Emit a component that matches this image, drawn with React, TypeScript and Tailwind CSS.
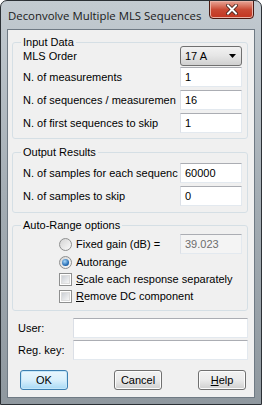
import React from 'react';

function TextBox({ value = '', width = 'w-[62px]', disabled = false }: { value?: string; width?: string; disabled?: boolean }) {
  return (
    <div
      className={`${width} h-[20px] flex items-center px-[4px] border border-t-[#abadb3] border-l-[#dbdfe6] border-r-[#e3e9ef] border-b-[#e3e9ef] ${
        disabled ? 'bg-[#f4f4f4] text-[#6d6d6d] border-[#b5b5b5]' : 'bg-white text-black'
      }`}
    >
      {value}
    </div>
  );
}

function Radio({ checked = false }: { checked?: boolean }) {
  return (
    <div className="w-[13px] h-[13px] rounded-full border border-[#8e8f8f] bg-linear-to-br from-[#d4d4d4] to-[#fbfbfb] flex items-center justify-center shrink-0">
      {checked && (
        <div className="w-[7px] h-[7px] rounded-full bg-[radial-gradient(circle_at_40%_35%,#a8d8fb,#2168b0_65%,#0e3f78)]" />
      )}
    </div>
  );
}

function Check() {
  return (
    <div className="w-[13px] h-[13px] border border-[#8e8f8f] bg-white p-[1px] shrink-0">
      <div className="w-full h-full bg-linear-to-br from-[#cbcfd5] to-[#f7f7f7] border border-[#dcdcdc]" />
    </div>
  );
}

function Button({ children, focused = false, className = '' }: { children: React.ReactNode; focused?: boolean; className?: string }) {
  return (
    <div
      className={`w-[48px] h-[20px] rounded-[3px] border flex items-center justify-center ${
        focused
          ? 'border-[#3c7fb1] bg-linear-to-b from-[#eaf6fd] via-[#d9f0fc] to-[#a7d9f5] shadow-[inset_0_0_0_1px_#c5e7f9]'
          : 'border-[#707070] bg-linear-to-b from-[#f2f2f2] via-[#ebebeb] to-[#cfcfcf] shadow-[inset_0_0_0_1px_#fcfcfc]'
      } ${className}`}
    >
      {children}
    </div>
  );
}

function Row({ label, children }: { label: string; children: React.ReactNode }) {
  return (
    <div className="flex items-center justify-between h-[20px]">
      <span className="whitespace-nowrap">{label}</span>
      {children}
    </div>
  );
}

export default function App() {
  return (
    <div className="w-[262px] h-[405px] rounded-t-[7px] border border-[#2b3035] bg-linear-to-b from-[#c3cbd1] via-[#a3acb3] to-[#8f989f] flex flex-col font-['Liberation_Sans',Arial,sans-serif] text-[11px] text-black overflow-hidden">
      {/* Title bar */}
      <div className="h-[28px] flex items-start shrink-0">
        <span className="pl-[7px] pt-[6px] font-['Open_Sans',sans-serif] text-[11.4px] text-[#1a1a1a] whitespace-nowrap">
          Deconvolve Multiple MLS Sequences
        </span>
        <div className="ml-auto mr-[7px] -mt-[1px] w-[45px] h-[19px] rounded-b-[4px] border border-[#4b1a12] bg-linear-to-b from-[#e8a597] via-[#c94a35] to-[#c2341f] flex items-center justify-center shadow-[inset_0_0_0_1px_#eab2a6]">
          <svg width="12" height="11" viewBox="0 0 12 11">
            <path d="M2 1.5L10 9.5M10 1.5L2 9.5" stroke="#3a1a14" strokeWidth="3.6" strokeLinecap="square" />
            <path d="M2 1.5L10 9.5M10 1.5L2 9.5" stroke="#ffffff" strokeWidth="2" strokeLinecap="square" />
          </svg>
        </div>
      </div>

      {/* Client area */}
      <div className="mx-[6px] h-[369px] border border-[#6f7a84] bg-[#f0f0f0] shrink-0">
        {/* Input Data */}
        <fieldset className="mt-[8px] ml-[4px] mr-[6px] border border-[#d5dfe5] rounded-[3px] pl-[10px] pr-[5px] pb-[5px]">
          <legend className="leading-[8px] px-[2px] -ml-[2px]">Input Data</legend>
          <Row label="MLS Order">
            <div className="w-[62px] h-[20px] rounded-[3px] border border-[#707070] bg-linear-to-b from-[#f2f2f2] via-[#e5e5e5] to-[#d0d0d0] flex items-center pl-[4px] pr-[5px]">
              <span>17 A</span>
              <svg className="ml-auto" width="7" height="4" viewBox="0 0 7 4">
                <path d="M0 0H7L3.5 4Z" fill="#000" />
              </svg>
            </div>
          </Row>
          <div className="mt-[1px] flex flex-col gap-[3px]">
            <Row label="N. of measurements">
              <TextBox value="1" />
            </Row>
            <Row label="N. of sequences / measuremen">
              <TextBox value="16" />
            </Row>
            <Row label="N. of first sequences to skip">
              <TextBox value="1" />
            </Row>
          </div>
        </fieldset>

        {/* Output Results */}
        <fieldset className="mt-[9px] ml-[4px] mr-[6px] border border-[#d5dfe5] rounded-[3px] pl-[10px] pr-[5px] pt-[7px] pb-[6px]">
          <legend className="leading-[8px] px-[2px] -ml-[2px]">Output Results</legend>
          <div className="flex flex-col gap-[3px]">
            <Row label="N. of samples for each sequenc">
              <TextBox value="60000" />
            </Row>
            <Row label="N. of samples to skip">
              <TextBox value="0" />
            </Row>
          </div>
        </fieldset>

        {/* Auto-Range options */}
        <fieldset className="mt-[8px] ml-[4px] mr-[6px] border border-[#d5dfe5] rounded-[3px] pl-[10px] pr-[5px] pt-[5px] pb-[5px]">
          <legend className="leading-[8px] px-[2px] -ml-[2px]">Auto-Range options</legend>
          <div className="flex items-center h-[20px] pl-[36px]">
            <Radio />
            <span className="ml-[4px] whitespace-nowrap">Fixed gain (dB) =</span>
            <div className="ml-auto">
              <TextBox value="39.023" disabled />
            </div>
          </div>
          <div className="flex items-center h-[17px] pl-[36px]">
            <Radio checked />
            <span className="ml-[4px]">Autorange</span>
          </div>
          <div className="flex items-center h-[17px] pl-[36px]">
            <Check />
            <span className="ml-[4px] whitespace-nowrap">
              <u>S</u>cale each response separately
            </span>
          </div>
          <div className="flex items-center h-[17px] pl-[36px]">
            <Check />
            <span className="ml-[4px] whitespace-nowrap">
              <u>R</u>emove DC component
            </span>
          </div>
        </fieldset>

        {/* User / key */}
        <div className="mt-[7px] flex flex-col gap-[2px] pl-[10px] pr-[6px]">
          <div className="flex items-center justify-between">
            <span>User:</span>
            <TextBox width="w-[175px]" />
          </div>
          <div className="flex items-center justify-between">
            <span>Reg. key:</span>
            <TextBox width="w-[175px]" />
          </div>
        </div>

        {/* Buttons */}
        <div className="mt-[10px] flex items-center pl-[12px]">
          <Button focused>OK</Button>
          <Button className="ml-[46px]">Cancel</Button>
          <Button className="ml-[36px]">
            <span>
              <u>H</u>elp
            </span>
          </Button>
        </div>
      </div>
    </div>
  );
}
